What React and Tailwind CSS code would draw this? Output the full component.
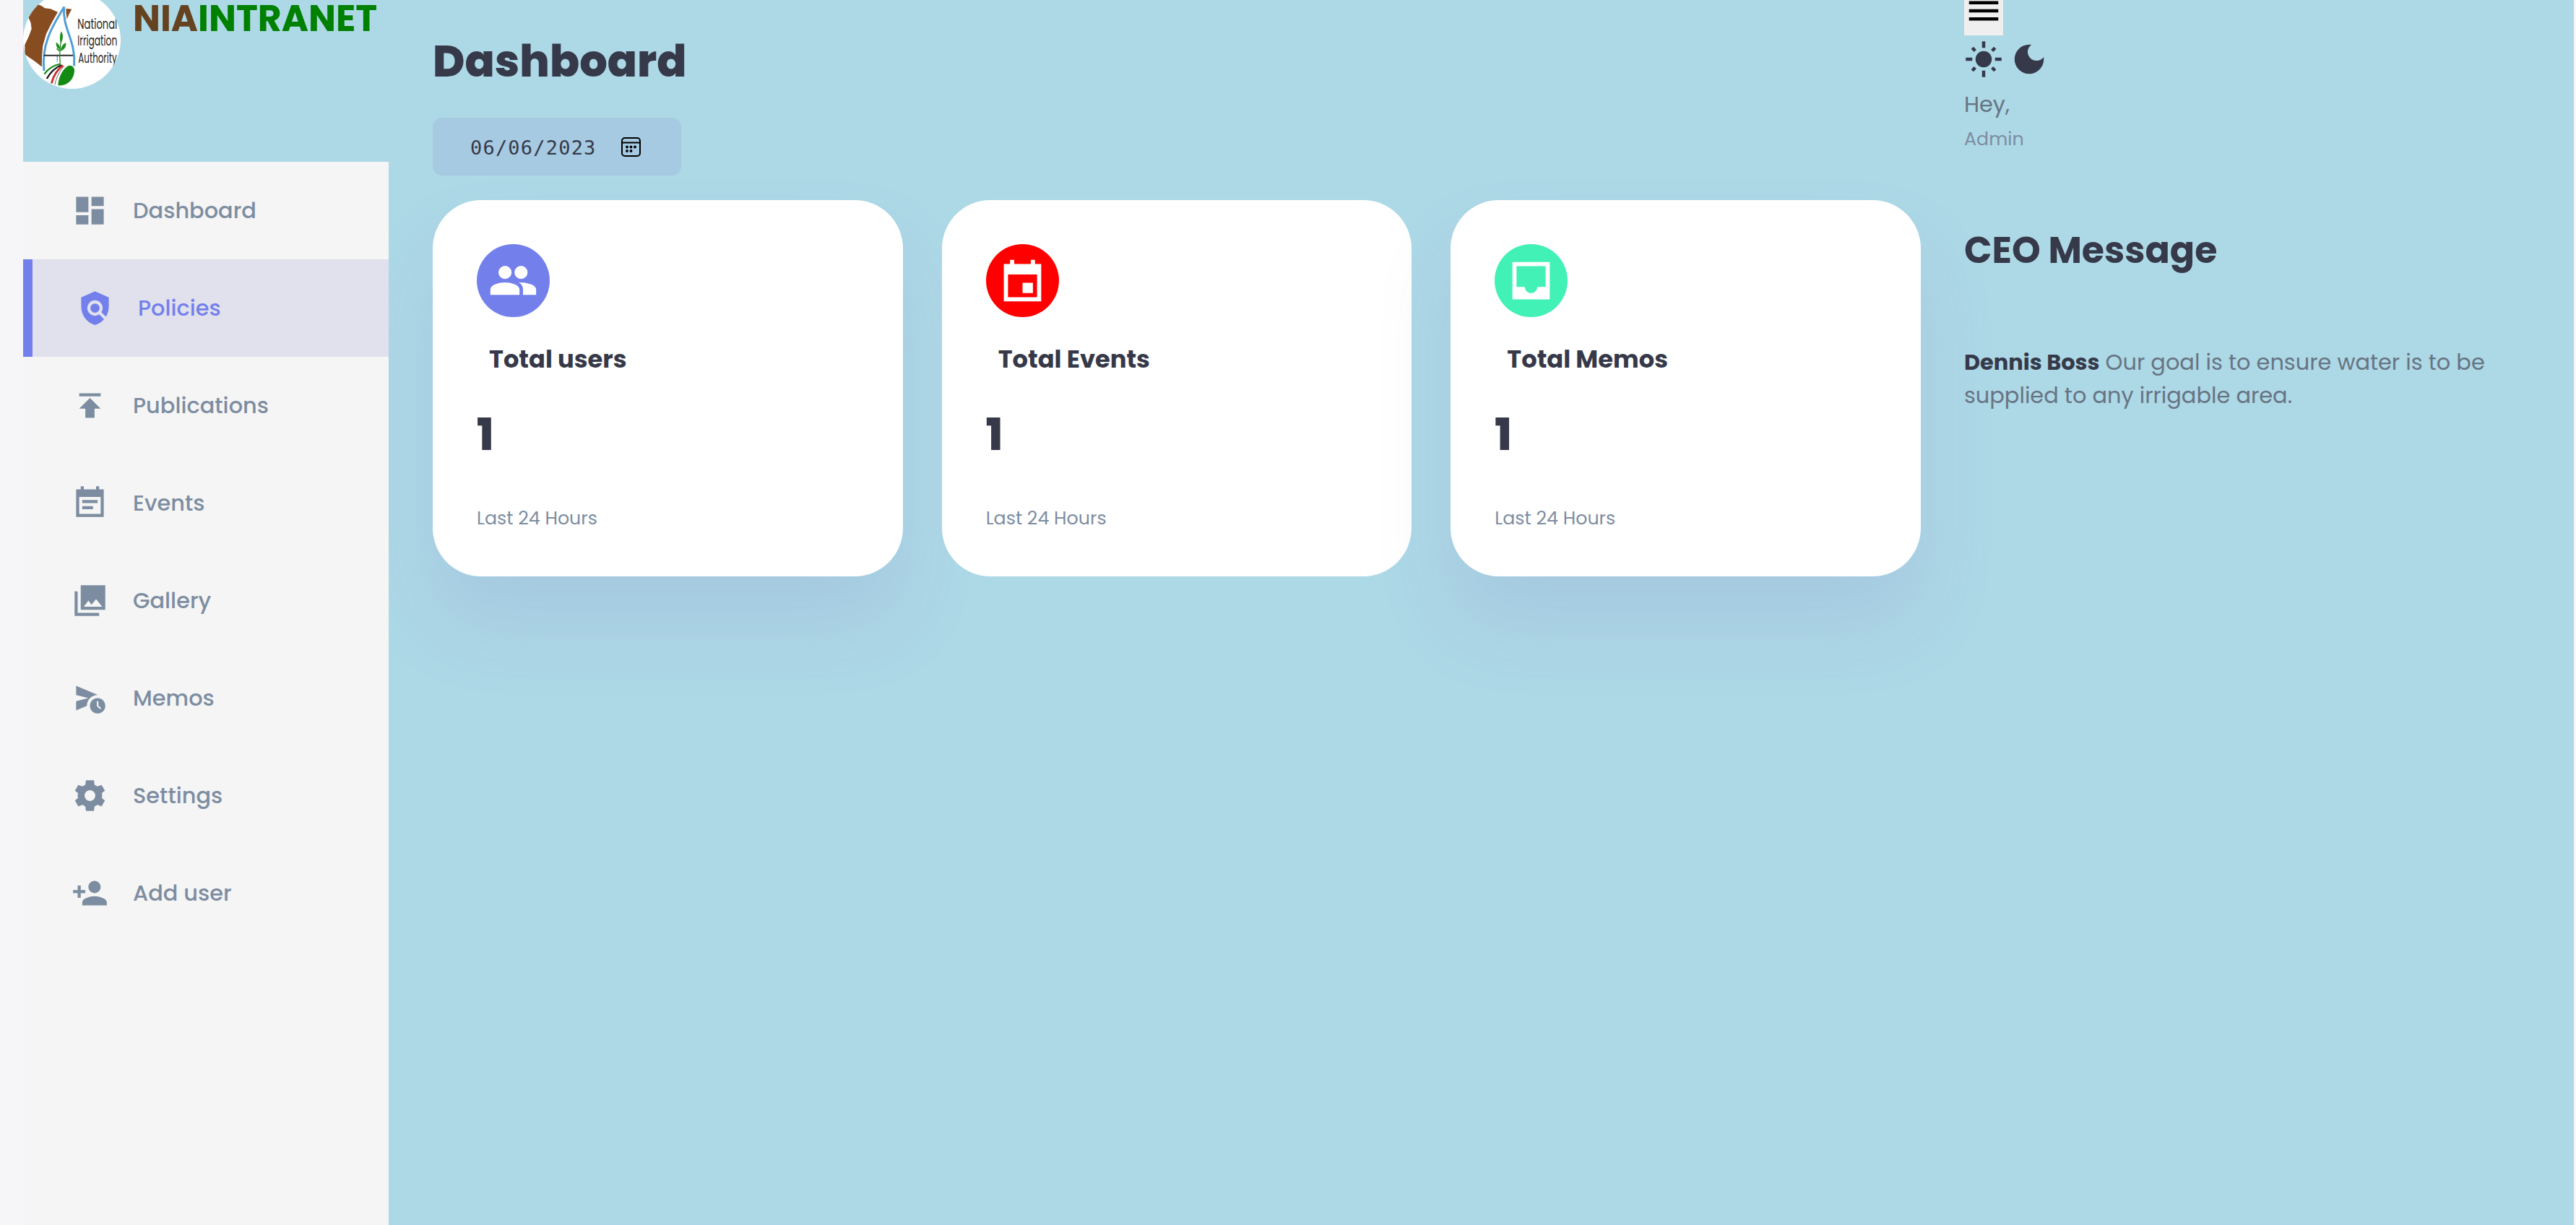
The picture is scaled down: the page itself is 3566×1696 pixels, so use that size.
import React from "react";
import { MdDashboard, MdPolicy, MdPublish, MdPersonAdd } from "react-icons/md";

function Glyph({ d, className }) {
  return (
    <svg viewBox="0 0 24 24" fill="currentColor" fillRule="evenodd" className={className}>
      <path d={d} />
    </svg>
  );
}

const EVENT_NOTE =
  "M3 3h3V1h2v2h8V1h2v2h3v18H3zM5 8v11h14V8zM7 10h10v2H7zM7 14h7v2H7z";
const PHOTO_LIBRARY =
  "M22 18V2H6v16h16zM11 12l2.03 2.71L16 11l4 5H8l3-4zM2 6v16h16v-2H4V6H2z";
const SCHEDULE_SEND =
  "M17 10c.1 0 .19.01.28.01L3 4v6l8 2-8 2v6l7-2.95V17c0-3.86 3.14-7 7-7zM17 12c-2.76 0-5 2.24-5 5s2.24 5 5 5 5-2.24 5-5-2.24-5-5-5zm1.65 7.35L16.5 17.2V14h1v2.79l1.85 1.85-.7.71z";
const SETTINGS =
  "M14.6 2H9.4L9 4.9 7.1 6.05 4.4 5 2.25 8.8l1.95 1.5a8 8 0 0 0 0 3.4l-1.95 1.5L4.4 19l2.7-1.05L9 19.1l.4 2.9h5.2l.4-2.9 1.9-1.15L19.6 19l2.15-3.8-1.95-1.5a8 8 0 0 0 0-3.4l1.95-1.5L19.6 5l-2.7 1.05L15 4.9zM12 15.5a3.5 3.5 0 1 1 0-7 3.5 3.5 0 0 1 0 7z";
const PEOPLE =
  "M8.05 4.9a3.15 3.15 0 1 1 0 6.3 3.15 3.15 0 0 1 0-6.3zM15.75 4.9a3.15 3.15 0 1 1 0 6.3 3.15 3.15 0 0 1 0-6.3zM1 18.85V16.2c0-2.2 4.1-3.35 7-3.35s7 1.15 7 3.35v2.65zM14.7 12.85c4 0 8.3 1.15 8.3 3.35v2.65h-6.3V16.2c0-1.5-.8-2.6-2-3.35z";
const EVENT =
  "M3 4h3V2h2v2h8V2h2v2h3v18H3zM5 9v11h14V9zM12 13h5v5h-5z";
const INBOX =
  "M3 3v18h18V3H3zm16 12h-4c0 1.62-1.38 3-3 3s-3-1.38-3-3H5V5h14v10z";
const DARK_MODE =
  "M12 3a9 9 0 1 0 9 9c0-.46-.04-.92-.1-1.36a5.389 5.389 0 0 1-4.4 2.26 5.403 5.403 0 0 1-3.14-9.8c-.44-.06-.9-.1-1.36-.1z";

const NAV = [
  { label: "Dashboard", icon: <MdDashboard className="size-[51px]" /> },
  { label: "Policies", icon: <MdPolicy className="size-[51px]" />, active: true },
  { label: "Publications", icon: <MdPublish className="size-[51px]" /> },
  { label: "Events", icon: <Glyph d={EVENT_NOTE} className="size-[51px]" /> },
  { label: "Gallery", icon: <Glyph d={PHOTO_LIBRARY} className="size-[51px]" /> },
  { label: "Memos", icon: <Glyph d={SCHEDULE_SEND} className="size-[51px]" /> },
  { label: "Settings", icon: <Glyph d={SETTINGS} className="size-[51px]" /> },
  { label: "Add user", icon: <MdPersonAdd className="size-[51px]" /> },
];

const CARDS = [
  { title: "Total users", icon: PEOPLE, color: "bg-[#7380ec]", shadow: "shadow-[0_67px_101px_rgba(132,139,200,0.18)]" },
  { title: "Total Events", icon: EVENT, color: "bg-[#ff0000]", shadow: "shadow-none" },
  { title: "Total Memos", icon: INBOX, color: "bg-[#41f1b6]", shadow: "shadow-[0_67px_101px_rgba(132,139,200,0.18)]" },
];

function Logo() {
  return (
    <svg viewBox="36 -36 405 405" className="-mt-3 size-[135px] shrink-0 rounded-full bg-white">
      <path
        fill="#874c20"
        d="M62 45 75 28 95 17 112 24 126 34 150 37 180 50 156 92 132 140 118 190 114 235 115 278 85 255 43 226 43 186 60 150 71 120 68 95 58 72zM211 35 238 38 226 60 216 85 216 118 208 95z"
      />
      <path fill="none" stroke="#fff" strokeWidth="17" d="M206 26C180 80 112 165 123 296M206 26C200 120 256 160 247 276" />
      <path fill="none" stroke="#4f9fd6" strokeWidth="9" d="M206 28C180 80 108 165 123 294M206 28C198 120 256 165 248 274" />
      <path stroke="#2b2b2b" strokeWidth="6" d="M122 230h121" />
      <path stroke="#1d72b8" strokeWidth="4" strokeDasharray="6 3" d="M178 234v22" />
      <path fill="none" stroke="#1f8f1f" strokeWidth="4" d="M190 266C187 235 188 200 195 160" />
      <path
        fill="#1f8f1f"
        d="M195 130c10 18 6 38-2 50-6-16-6-34 2-50zM214 178c2 16-6 28-22 34 0-16 8-28 22-34zM173 176c12 6 18 18 17 32-12-4-18-16-17-32zM190 206c-6-6-12-6-16-4 4 8 10 12 16 10z"
      />
      <path fill="none" stroke="#1f8f1f" strokeWidth="7" d="M124 308C138 288 158 272 190 266" />
      <path fill="none" stroke="#1a1a1a" strokeWidth="7" d="M134 327C148 302 166 282 196 270" />
      <path fill="none" stroke="#c8262d" strokeWidth="8" d="M154 346C162 314 176 290 202 272" />
      <path fill="none" stroke="#1a1a1a" strokeWidth="2" d="M168 352C174 320 188 292 208 274" />
      <path fill="#138a13" d="M181 355C182 325 196 292 222 274 238 268 250 280 249 296 246 330 220 358 181 355z" />
      <g fill="#222" fontFamily="Poppins, Lato, sans-serif" fontSize="60">
        <text x="262" y="121" textLength="165" lengthAdjust="spacingAndGlyphs">National</text>
        <text x="262" y="188" textLength="165" lengthAdjust="spacingAndGlyphs">Irrigation</text>
        <text x="265" y="260" textLength="160" lengthAdjust="spacingAndGlyphs">Authority</text>
      </g>
    </svg>
  );
}

function Sidebar() {
  return (
    <aside className="relative z-10 flex w-[506px] shrink-0 flex-col">
      <div className="flex h-56 items-start">
        <Logo />
        <h2 className="ml-[17px] pt-px text-[50.5px] leading-[50px] font-bold whitespace-nowrap text-[#008000]">
          <span className="text-[#654321]">NIA</span>INTRANET
        </h2>
      </div>
      <nav className="flex flex-1 flex-col bg-[#f5f5f5]">
        {NAV.map((item) => (
          <a
            key={item.label}
            className={
              item.active
                ? "flex h-[135px] items-center gap-[34px] border-l-[13px] border-[#7380ec] bg-[#e1e1ed] pl-[61px] text-[30.4px] font-medium text-[#7380ec]"
                : "flex h-[135px] items-center gap-[34px] pl-[67px] text-[30.4px] font-medium text-[#7d8da1]"
            }
          >
            {item.icon}
            <span className="pt-0.5 leading-none">{item.label}</span>
          </a>
        ))}
      </nav>
    </aside>
  );
}

function DateField() {
  return (
    <div className="mt-8 flex h-20 w-[344px] items-center rounded-[13px] bg-[#a6cae1] pl-[52px]">
      <span className="pt-0.5 font-['DejaVu_Sans_Mono',monospace] text-[27px] leading-none tracking-[1.2px] whitespace-nowrap text-[#363949]">
        06/06/2023
      </span>
      <svg viewBox="0 0 27 27" className="ml-[34px] size-[27px]" fill="none" stroke="#000" strokeWidth="2">
        <rect x="1" y="1" width="25" height="25" rx="4" />
        <path d="M1 7.5h25" />
        <g fill="#000" stroke="none">
          <circle cx="8" cy="13.5" r="1.9" />
          <circle cx="13.5" cy="13.5" r="1.9" />
          <circle cx="19" cy="13.5" r="1.9" />
          <circle cx="8" cy="19" r="1.9" />
          <circle cx="13.5" cy="19" r="1.9" />
        </g>
      </svg>
    </div>
  );
}

function Card({ card }) {
  return (
    <article className={`flex h-[521px] flex-col items-start rounded-[67px] bg-white px-[61px] pt-[61px] ${card.shadow}`}>
      <div className={`flex size-[101px] items-center justify-center rounded-full text-white ${card.color}`}>
        <Glyph d={card.icon} className="size-[69px]" />
      </div>
      <h3 className="mt-[39px] ml-[17px] text-[33.7px] leading-10 font-bold">{card.title}</h3>
      <h1 className="mt-[38px] text-[60.7px] leading-[92px] font-extrabold">1</h1>
      <small className="mt-[51px] text-[25.3px] leading-9 text-[#7d8da1]">Last 24 Hours</small>
    </article>
  );
}

function Aside() {
  return (
    <section className="flex w-[760px] flex-col items-start">
      <button className="flex h-[49px] w-[54px] items-start bg-[#efefef] text-black">
        <svg viewBox="0 0 24 24" className="-mt-3 size-[54px] shrink-0" fill="currentColor">
          <path d="M3 6h18v2H3zM3 11h18v2H3zM3 16h18v2H3z" />
        </svg>
      </button>
      <div className="mt-1.5 flex gap-[9px]">
        <svg viewBox="0 0 24 24" className="size-[54px]" fill="currentColor" stroke="currentColor" strokeWidth="2">
          <circle cx="12" cy="12" r="5" stroke="none" />
          <path d="M12 1v4M12 19v4M1 12h4M19 12h4M5 5l1.8 1.8M17.2 17.2 19 19M5 19l1.8-1.8M17.2 6.8 19 5" />
        </svg>
        <Glyph d={DARK_MODE} className="size-[54px]" />
      </div>
      <p className="mt-[13px] text-[30.4px] leading-[46px] text-[#677483]">Hey,</p>
      <small className="mt-[6px] text-[25.3px] leading-9 text-[#7d8da1]">Admin</small>
      <h2 className="mt-[99px] text-[50.6px] leading-[76px] font-bold">CEO Message</h2>
      <p className="mt-[94px] text-[30.4px] leading-[46px] text-[#677483]">
        <b className="font-bold text-[#363949]">Dennis Boss</b> Our goal is to ensure water is to be supplied to any
        irrigable area.
      </p>
    </section>
  );
}

export default function App() {
  return (
    <div className="h-[1696px] overflow-hidden bg-[#f6f6f9] pr-[3px] pl-8 font-[Poppins,Inter,sans-serif] text-[#363949]">
      <div className="flex h-full bg-[#add8e6]">
        <Sidebar />
        <main className="ml-[61px] w-[2060px] shrink-0">
          <h1 className="mt-[39px] text-[60.7px] leading-[92px] font-extrabold">Dashboard</h1>
          <DateField />
          <div className="mt-[34px] grid grid-cols-3 gap-[54px]">
            {CARDS.map((card) => (
              <Card key={card.title} card={card} />
            ))}
          </div>
        </main>
        <div className="ml-[60px]">
          <Aside />
        </div>
      </div>
    </div>
  );
}
